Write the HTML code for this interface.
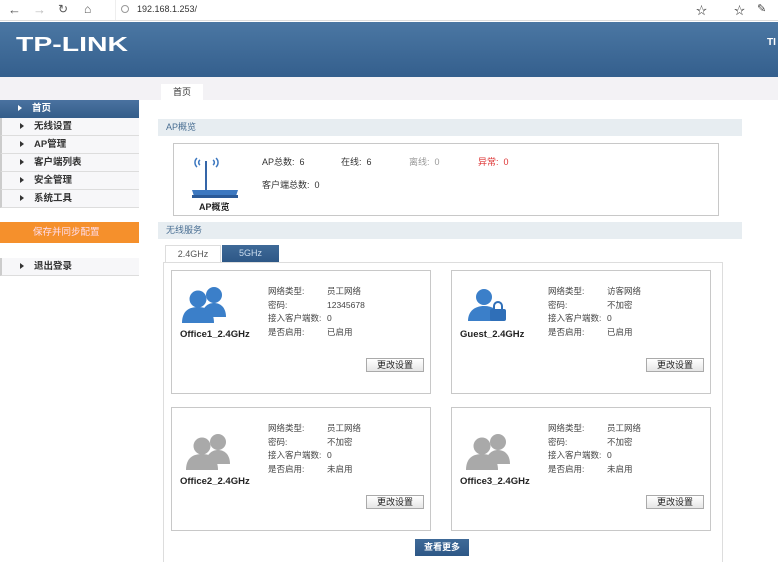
<!DOCTYPE html>
<html><head><meta charset="utf-8"><style>
*{margin:0;padding:0;box-sizing:border-box}
body{width:778px;height:556px;overflow:hidden;background:#fff;font-family:"Liberation Sans","Noto Sans CJK SC",sans-serif;font-size:9px;color:#333;position:relative}
.a{position:absolute}
.bar{left:0;top:0;width:778px;height:21px;background:#fff;border-bottom:1px solid #ddd}
.hdr{left:0;top:22px;width:778px;height:55px;background:linear-gradient(#4b77a3,#345f8d)}
.band{left:0;top:77px;width:778px;height:23px;background:#f3f2f5}
.nav{left:0;width:139px;height:18px;border-bottom:1px solid #ddd;border-left:2px solid #ccc;background:#f7f7f9;font-weight:bold;font-size:9.5px;color:#333;line-height:17px;padding-left:32px}
.nav:before{content:"";position:absolute;left:18px;top:5px;border-left:4px solid #333;border-top:3.5px solid transparent;border-bottom:3.5px solid transparent}
.sec{left:158px;width:584px;height:17px;background:#e7edf1;color:#4a6f93;line-height:17px;padding-left:8px;font-size:9px}
.card{width:260px;height:124px;border:1px solid #c8c8c8;background:#fff}
.card .n{position:absolute;left:8px;top:58px;font-weight:bold;font-size:9.5px;color:#222}
.card .t{position:absolute;left:96px;top:14px;line-height:13.5px;font-size:8.5px;color:#444}
.card .v{position:absolute;left:155px;top:14px;line-height:13.5px;font-size:8.5px;color:#444}
.btn{position:absolute;right:6px;top:87px;width:58px;height:14px;border:1px solid #aaa;background:linear-gradient(#fff,#e6e6e6);font-size:9px;text-align:center;line-height:12px;color:#222}
</style></head><body>
<div class="a bar">
 <div class="a" style="left:8px;top:2px;font-size:13px;color:#555">&#8592;</div>
 <div class="a" style="left:33px;top:2px;font-size:13px;color:#bbb">&#8594;</div>
 <div class="a" style="left:58px;top:2px;font-size:12px;color:#555">&#8635;</div>
 <div class="a" style="left:84px;top:2px;font-size:12px;color:#555">&#8962;</div>
 <div class="a" style="left:115px;top:0;width:600px;height:20px;background:#fff;border-left:1px solid #eee"></div>
 <div class="a" style="left:121px;top:5px;width:8px;height:8px;border:1px solid #999;border-radius:50%"></div>
 <div class="a" style="left:137px;top:4px;font-size:9px;color:#333">192.168.1.253/</div>
 <div class="a" style="left:696px;top:2px;font-size:11px;color:#444">&#9734;</div>
 <div class="a" style="left:734px;top:2px;font-size:11px;color:#444">&#9734;</div>
 <div class="a" style="left:757px;top:2px;font-size:11px;color:#444">&#9998;</div>
</div>
<div class="a hdr"><div class="a" style="left:16px;top:12px;font-size:20px;font-weight:bold;color:#fff;letter-spacing:0px;transform:scaleX(1.42);transform-origin:left top">TP-LINK</div><div class="a" style="left:767px;top:15px;font-size:10px;font-weight:bold;color:#fff">TI</div></div>
<div class="a band"></div>
<div class="a" style="left:161px;top:84px;width:42px;height:17px;background:#fff;text-align:center;line-height:16px;color:#333">首页</div>
<div class="a" style="left:0;top:100px;width:139px;height:18px;background:linear-gradient(#4a72a0,#345d89);color:#fff;font-weight:bold;font-size:9.5px;line-height:17px;padding-left:32px">首页<span class="a" style="left:18px;top:5px;border-left:4px solid #fff;border-top:3.5px solid transparent;border-bottom:3.5px solid transparent"></span></div>
<div class="a nav" style="top:118px">无线设置</div>
<div class="a nav" style="top:136px">AP管理</div>
<div class="a nav" style="top:154px">客户端列表</div>
<div class="a nav" style="top:172px">安全管理</div>
<div class="a nav" style="top:190px">系统工具</div>
<div class="a" style="left:0;top:222px;width:139px;height:21px;background:#f5902c;color:#fde;line-height:21px;padding-left:33px;font-size:9.5px">保存并同步配置</div>
<div class="a nav" style="top:258px">退出登录</div>
<div class="a sec" style="top:119px">AP概览</div>
<div class="a" style="left:173px;top:143px;width:546px;height:73px;border:1px solid #c8c8c8">
 <svg class="a" style="left:14px;top:8px" width="56" height="50" viewBox="0 0 56 50">
  <path d="M9 6a6 6 0 0 0 0 9M12 8a3 3 0 0 0 0 5M28 6a6 6 0 0 1 0 9M25 8a3 3 0 0 1 0 5" stroke="#3d78c0" stroke-width="1.5" fill="none"/>
  <rect x="17" y="9" width="2" height="30" fill="#3566a8"/>
  <path d="M4 38h46l-2 6H6z" fill="#3d78c0"/><rect x="4" y="43" width="46" height="3" fill="#2b5a98"/>
 </svg>
 <div class="a" style="left:25px;top:56px;font-weight:bold;font-size:9px;color:#222">AP概览</div>
 <div class="a" style="left:88px;top:11px">AP总数:&nbsp; 6</div>
 <div class="a" style="left:167px;top:11px">在线:&nbsp; 6</div>
 <div class="a" style="left:235px;top:11px;color:#999">离线:&nbsp; 0</div>
 <div class="a" style="left:304px;top:11px;color:#d33">异常:&nbsp; 0</div>
 <div class="a" style="left:88px;top:34px">客户端总数:&nbsp; 0</div>
</div>
<div class="a sec" style="top:222px">无线服务</div>
<div class="a" style="left:165px;top:245px;width:56px;height:18px;background:#fff;border:1px solid #ddd;border-bottom:none;text-align:center;line-height:17px;color:#555">2.4GHz</div>
<div class="a" style="left:222px;top:245px;width:57px;height:17px;background:linear-gradient(#3f6a98,#2d5786);text-align:center;line-height:17px;color:#cde">5GHz</div>
<div class="a" style="left:163px;top:262px;width:560px;height:300px;border-left:1px solid #ddd;border-top:1px solid #ddd;border-right:1px solid #ddd"></div>

<div class="a card" style="left:171px;top:270px">
 <svg class="a" style="left:8px;top:14px" width="52" height="40" viewBox="0 0 52 40"><g fill="#3b7fc9"><circle cx="34" cy="10" r="8"/><path d="M22 32c0-10 6-14 12-14s12 4 12 14z"/><circle cx="18" cy="14" r="8.5"/><path d="M2 38c0-12 7-16 16-16s16 4 16 16z"/></g></svg>
 <div class="n">Office1_2.4GHz</div>
 <div class="t">网络类型:<br>密码:<br>接入客户端数:<br>是否启用:</div>
 <div class="v">员工网络<br>12345678<br>0<br>已启用</div>
 <div class="btn">更改设置</div>
</div>
<div class="a card" style="left:451px;top:270px">
 <svg class="a" style="left:16px;top:16px" width="44" height="40" viewBox="0 0 44 40"><g fill="#3b7fc9"><circle cx="16" cy="10" r="8"/><path d="M0 34c0-10 7-15 16-15s14 4 16 10v5z"/><rect x="22" y="22" width="16" height="12" rx="2" fill="#2f6fb8"/><path d="M26 22v-3a4 4 0 0 1 8 0v3" stroke="#2f6fb8" stroke-width="2" fill="none"/></g></svg>
 <div class="n">Guest_2.4GHz</div>
 <div class="t">网络类型:<br>密码:<br>接入客户端数:<br>是否启用:</div>
 <div class="v">访客网络<br>不加密<br>0<br>已启用</div>
 <div class="btn">更改设置</div>
</div>
<div class="a card" style="left:171px;top:407px">
 <svg class="a" style="left:12px;top:24px" width="52" height="40" viewBox="0 0 52 40"><g fill="#a9a9a9"><circle cx="34" cy="10" r="8"/><path d="M22 32c0-10 6-14 12-14s12 4 12 14z"/><circle cx="18" cy="14" r="8.5"/><path d="M2 38c0-12 7-16 16-16s16 4 16 16z"/></g></svg>
 <div class="n" style="top:68px">Office2_2.4GHz</div>
 <div class="t">网络类型:<br>密码:<br>接入客户端数:<br>是否启用:</div>
 <div class="v">员工网络<br>不加密<br>0<br>未启用</div>
 <div class="btn">更改设置</div>
</div>
<div class="a card" style="left:451px;top:407px">
 <svg class="a" style="left:12px;top:24px" width="52" height="40" viewBox="0 0 52 40"><g fill="#a9a9a9"><circle cx="34" cy="10" r="8"/><path d="M22 32c0-10 6-14 12-14s12 4 12 14z"/><circle cx="18" cy="14" r="8.5"/><path d="M2 38c0-12 7-16 16-16s16 4 16 16z"/></g></svg>
 <div class="n" style="top:68px">Office3_2.4GHz</div>
 <div class="t">网络类型:<br>密码:<br>接入客户端数:<br>是否启用:</div>
 <div class="v">员工网络<br>不加密<br>0<br>未启用</div>
 <div class="btn">更改设置</div>
</div>
<div class="a" style="left:415px;top:539px;width:54px;height:17px;background:linear-gradient(#3f6a98,#2d5786);color:#fff;font-weight:bold;text-align:center;line-height:17px">查看更多</div>
</body></html>
